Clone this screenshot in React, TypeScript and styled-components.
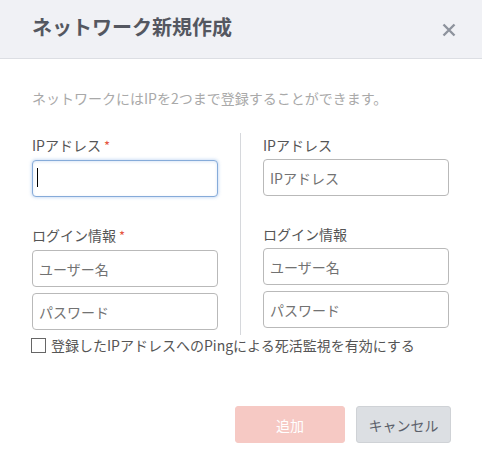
import React from "react";
import styled, { createGlobalStyle, css } from "styled-components";

const GlobalStyle = createGlobalStyle`
  html, body {
    margin: 0;
    padding: 0;
    background: #fff;
  }
  body {
    font-family: "Noto Sans CJK JP", "Noto Sans", sans-serif;
    color: #555;
  }
  * {
    box-sizing: border-box;
  }
`;

const Modal = styled.div`
  width: 482px;
  height: 468px;
  background: #fff;
  display: flex;
  flex-direction: column;
`;

const Header = styled.div`
  height: 59px;
  background: #f0f1f5;
  border-bottom: 1px solid #dcdee3;
  display: flex;
  align-items: center;
  justify-content: space-between;
  padding: 0 24px 0 32px;
`;

const Title = styled.h2`
  margin: 0;
  font-size: 20px;
  font-weight: 700;
  line-height: 24px;
  color: #545760;
  margin-top: -4px;
`;

const CloseButton = styled.button`
  border: 0;
  background: none;
  padding: 0;
  width: 18px;
  height: 18px;
  display: flex;
  align-items: center;
  justify-content: center;
  cursor: pointer;
  margin-top: 2px;
`;

const Body = styled.div`
  padding: 29px 33px 0 32px;
`;

const Description = styled.p`
  margin: 0;
  font-size: 14px;
  line-height: 20px;
  color: #a9a9a9;
`;

const FormGrid = styled.div`
  margin-top: 25px;
  display: grid;
  grid-template-columns: 186px 1px 186px;
  column-gap: 22px;
`;

const Column = styled.div`
  display: flex;
  flex-direction: column;
  padding: 2px 0 5px;
`;

const Divider = styled.div`
  background: #d6d8dc;
`;

const Label = styled.label<{ $spaced?: boolean }>`
  font-size: 14px;
  line-height: 20px;
  color: #555;
  margin: ${(p) => (p.$spaced ? "28px" : "0")} 0 4px;
`;

const Required = styled.span`
  color: #e5553f;
  margin-left: 3px;
  font-size: 13px;
`;

const FieldWrap = styled.div<{ $gap?: boolean }>`
  position: relative;
  margin-top: ${(p) => (p.$gap ? "6px" : "0")};
`;

const Input = styled.input<{ $focused?: boolean }>`
  display: block;
  width: 186px;
  height: 37px;
  padding: 0 6px;
  border: 1px solid #b9b9b9;
  border-radius: 4px;
  font-family: "Noto Sans CJK JP", "Noto Sans", sans-serif;
  font-size: 14px;
  color: #333;
  outline: none;
  background: #fff;
  &::placeholder {
    color: #727272;
  }
  ${(p) =>
    p.$focused &&
    css`
      border-color: #86abd9;
      box-shadow: 0 0 3px 1px rgba(120, 165, 225, 0.35),
        inset 0 1px 3px rgba(120, 165, 225, 0.25);
    `}
`;

const Caret = styled.span`
  position: absolute;
  left: 5px;
  top: 8px;
  width: 1px;
  height: 19px;
  background: #000;
`;

const CheckRow = styled.label`
  display: flex;
  align-items: center;
  gap: 5px;
  margin-top: 0;
  font-size: 14px;
  line-height: 20px;
  color: #555;
  margin-left: -1px;
`;

const CheckBox = styled.span`
  width: 15px;
  height: 15px;
  border: 1px solid #666;
  background: #fff;
  flex-shrink: 0;
`;

const Footer = styled.div`
  display: flex;
  justify-content: flex-end;
  gap: 11px;
  padding: 51px 31px 0 0;
`;

const Button = styled.button<{ $variant: "primary" | "secondary" }>`
  height: 37px;
  border-radius: 3px;
  font-family: "Noto Sans CJK JP", "Noto Sans", sans-serif;
  font-size: 14px;
  cursor: pointer;
  ${(p) =>
    p.$variant === "primary"
      ? css`
          width: 110px;
          background: #f6c9c4;
          border: 1px solid #f6c9c4;
          color: #fff;
        `
      : css`
          width: 95px;
          background: #dcdfe3;
          border: 1px solid #cfd2d6;
          color: #5b5f6a;
        `}
`;

const CloseIcon = () => (
  <svg width="14" height="14" viewBox="0 0 14 14">
    <path
      d="M1.5 1.5 L12.5 12.5 M12.5 1.5 L1.5 12.5"
      stroke="#8e939d"
      strokeWidth="2.4"
      strokeLinecap="butt"
    />
  </svg>
);

export default function App() {
  return (
    <>
      <GlobalStyle />
      <Modal>
        <Header>
          <Title>ネットワーク新規作成</Title>
          <CloseButton aria-label="閉じる">
            <CloseIcon />
          </CloseButton>
        </Header>
        <Body>
          <Description>
            ネットワークにはIPを2つまで登録することができます。
          </Description>
          <FormGrid>
            <Column>
              <Label>
                IPアドレス<Required>*</Required>
              </Label>
              <FieldWrap>
                <Input $focused />
                <Caret />
              </FieldWrap>
              <Label $spaced>
                ログイン情報<Required>*</Required>
              </Label>
              <FieldWrap>
                <Input placeholder="ユーザー名" />
              </FieldWrap>
              <FieldWrap $gap>
                <Input type="password" placeholder="パスワード" />
              </FieldWrap>
            </Column>
            <Divider />
            <Column>
              <Label>IPアドレス</Label>
              <FieldWrap>
                <Input placeholder="IPアドレス" />
              </FieldWrap>
              <Label $spaced>ログイン情報</Label>
              <FieldWrap>
                <Input placeholder="ユーザー名" />
              </FieldWrap>
              <FieldWrap $gap>
                <Input type="password" placeholder="パスワード" />
              </FieldWrap>
            </Column>
          </FormGrid>
          <CheckRow>
            <CheckBox />
            登録したIPアドレスへのPingによる死活監視を有効にする
          </CheckRow>
        </Body>
        <Footer>
          <Button $variant="primary">追加</Button>
          <Button $variant="secondary">キャンセル</Button>
        </Footer>
      </Modal>
    </>
  );
}
